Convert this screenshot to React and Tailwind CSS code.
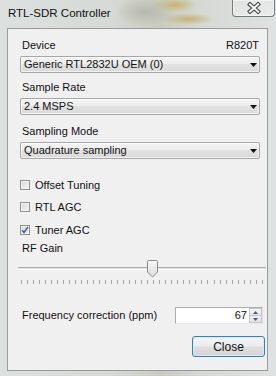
function Combo({ text, className }) {
  return (
    <div
      className={
        "h-[17px] ml-[12px] mr-[7px] rounded-[2px] border border-[#a7a7a7] bg-[linear-gradient(#f4f4f4,#ececec_50%,#e2e2e2_50%,#dadada)] flex items-center pl-[3px] pr-[2px] shadow-[inset_0_0_0_1px_rgba(255,255,255,0.6)] " +
        className
      }
    >
      <span className="flex-1 leading-none text-[#111]">{text}</span>
      <svg width="7" height="4" viewBox="0 0 7 4">
        <path d="M0 0H7L3.5 4Z" fill="#111" />
      </svg>
    </div>
  );
}

function Check({ label, checked, className }) {
  return (
    <div className={"flex items-center h-[14px] ml-[12px] " + className}>
      <div className="w-[10px] h-[10px] border border-[#8e8f8f] bg-[linear-gradient(135deg,#d6d6d6,#f6f6f6)] shadow-[inset_0_0_0_1px_#f4f4f4] flex items-center justify-center">
        {checked && (
          <svg width="8" height="8" viewBox="0 0 8 8">
            <path d="M1 4.2L3 6.5L7 1" fill="none" stroke="#4a5f97" strokeWidth="1.6" />
          </svg>
        )}
      </div>
      <span className="ml-[5px] leading-none text-[#111]">{label}</span>
    </div>
  );
}

export default function App() {
  const ticks = Array.from({ length: 41 }, (_, i) => i);
  return (
    <div className="w-[276px] h-[376px] overflow-hidden flex flex-col font-['Liberation_Sans',Arial,sans-serif] text-[11px] text-black bg-[radial-gradient(ellipse_22px_7px_at_175px_5px,#c8b56f,transparent),radial-gradient(ellipse_26px_6px_at_188px_19px,#c4b377,transparent),radial-gradient(ellipse_30px_14px_at_145px_12px,#b8b9ae,transparent),linear-gradient(90deg,#dce0df,#d6dad6_40%,#c9cbbd_58%,#d5d8d3_72%,#dfe2e2)]">
      <div className="h-[28px] flex items-start shrink-0">
        <div className="h-[28px] flex items-center pl-[8px] text-[11.5px] text-[#111]">RTL-SDR Controller</div>
        <div className="ml-auto mr-[1px] w-[43px] h-[17px] border border-t-0 border-[#707b7b] rounded-b-[4px] shadow-[inset_0_0_0_1px_rgba(255,255,255,0.5)] bg-[linear-gradient(rgba(255,255,255,0.15),rgba(255,255,255,0.35))] flex items-center justify-center">
          <svg width="14" height="12" viewBox="0 0 14 12">
            <path d="M3 2.5L11 9.5M11 2.5L3 9.5" stroke="#3d4444" strokeWidth="4.2" strokeLinecap="square" />
            <path d="M3 2.5L11 9.5M11 2.5L3 9.5" stroke="#f2f2f2" strokeWidth="2.2" strokeLinecap="square" />
          </svg>
        </div>
      </div>
      <div className="ml-[7px] mr-[8px] mb-[5px] flex-1 border border-[#9a9a9a] bg-[#f0f0f0] flex flex-col">
        <div className="h-[14px] mt-[9px] ml-[14px] mr-[8px] flex items-center justify-between text-[#111]">
          <span>Device</span>
          <span>R820T</span>
        </div>
        <Combo text="Generic RTL2832U OEM (0)" className="mt-[4px]" />
        <div className="h-[14px] mt-[7px] ml-[14px] flex items-center text-[#111]">Sample Rate</div>
        <Combo text="2.4 MSPS" className="mt-[4px]" />
        <div className="h-[14px] mt-[9px] ml-[14px] flex items-center text-[#111]">Sampling Mode</div>
        <Combo text="Quadrature sampling" className="mt-[4px]" />
        <Check label="Offset Tuning" className="mt-[19px]" />
        <Check label="RTL AGC" className="mt-[8px]" />
        <Check label="Tuner AGC" checked className="mt-[9px]" />
        <div className="h-[14px] mt-[4px] ml-[14px] flex items-center text-[#111]">RF Gain</div>
        <div className="relative h-[28px] mt-[3px] ml-[10px] mr-[1px]">
          <div className="mt-[9px] h-[3px] rounded-[1px] bg-[linear-gradient(#a9a9a9_0_1px,#e4e4e4_1px_2px,#ffffff_2px)]" />
          <div className="mt-[10px] h-[4px] mx-[3px] flex justify-between">
            {ticks.map((i) => (
              <div key={i} className="w-[1px] h-[4px] bg-[#a4a4a4]" />
            ))}
          </div>
          <svg className="absolute left-[129px] top-[2px]" width="11" height="18" viewBox="0 0 11 18">
            <defs>
              <linearGradient id="th" x1="0" y1="0" x2="0" y2="1">
                <stop offset="0" stopColor="#f7f7f7" />
                <stop offset="1" stopColor="#dcdcdc" />
              </linearGradient>
            </defs>
            <path d="M1.5 0.5H9.5Q10.5 0.5 10.5 1.5V12L5.5 17L0.5 12V1.5Q0.5 0.5 1.5 0.5Z" fill="url(#th)" stroke="#8a8a8a" />
          </svg>
        </div>
        <div className="h-[17px] mt-[21px] flex items-center">
          <span className="ml-[14px] text-[#111]">Frequency correction (ppm)</span>
          <div className="ml-auto mr-[4px] w-[88px] h-[17px] border border-[#abadb3] border-b-[#e3e9ef] border-r-[#dbdfe6] bg-white flex">
            <div className="flex-1 flex items-center justify-end pr-[2px] text-[#111]">67</div>
            <div className="w-[13px] flex flex-col">
              <div className="flex-1 border border-[#c6c6c6] bg-[linear-gradient(#f5f5f5,#e2e6ea)] flex items-center justify-center">
                <svg width="5" height="3" viewBox="0 0 5 3"><path d="M0 3H5L2.5 0Z" fill="#4b5a6e" /></svg>
              </div>
              <div className="flex-1 border border-t-0 border-[#c6c6c6] bg-[linear-gradient(#eef1f4,#dde2e7)] flex items-center justify-center">
                <svg width="5" height="3" viewBox="0 0 5 3"><path d="M0 0H5L2.5 3Z" fill="#4b5a6e" /></svg>
              </div>
            </div>
          </div>
        </div>
        <div className="mt-[12px] ml-auto mr-[2px] w-[73px] h-[21px] rounded-[3px] border border-[#3c7fb1] bg-[linear-gradient(#f4f4f4,#ececec_48%,#dedede_52%,#d5d5d5)] shadow-[inset_0_0_0_1px_#cfeefc] flex items-center justify-center text-[12px] text-[#111]">
          Close
        </div>
      </div>
    </div>
  );
}
